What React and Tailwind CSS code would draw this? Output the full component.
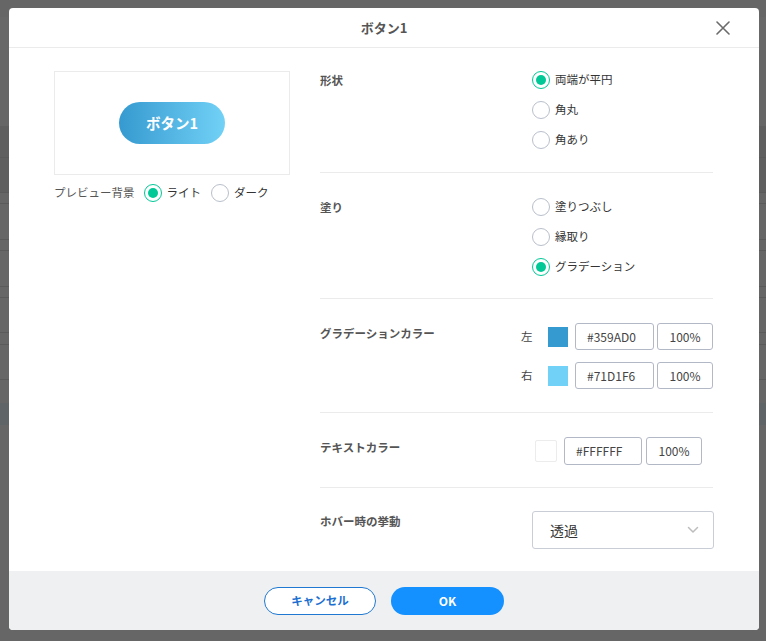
import React, { useState } from 'react';

const font = { fontFamily: '"Noto Sans CJK JP", "Noto Sans", sans-serif' };

function Radio({ checked, label, onClick }) {
  return (
    <button type="button" onClick={onClick} className="flex items-center h-[20px] gap-[5px] text-left">
      <span
        className={`w-[18px] h-[18px] rounded-full flex items-center justify-center shrink-0 bg-white ${
          checked ? 'border-[1.5px] border-[#00c896]' : 'border border-[#b9bfca]'
        }`}
      >
        {checked && <span className="w-[10px] h-[10px] rounded-full bg-[#00c896]" />}
      </span>
      <span className="text-[11.5px] text-[#333]">{label}</span>
    </button>
  );
}

function Section({ label, children, last, className = '' }) {
  return (
    <div className={`flex pt-6 pb-[22px] ${last ? '' : 'border-b border-[#ebebeb]'} ${className}`}>
      <div className="w-[212px] shrink-0 text-[11.5px] font-bold text-[#555] leading-[20px]">{label}</div>
      <div className="flex-1">{children}</div>
    </div>
  );
}

function ColorInput({ hex, pct, w = 'w-[79px]', h = 'h-[27px]', gap = 'gap-[3px]' }) {
  return (
    <div className={`flex ${gap}`}>
      <div className={`${w} ${h} border border-[#b3b8c6] rounded-[3px] pl-[11px] flex items-center text-[12px] text-[#444]`}>
        {hex}
      </div>
      <div className={`w-[56px] ${h} border border-[#b3b8c6] rounded-[3px] flex items-center justify-center text-[12px] text-[#444]`}>
        {pct}
      </div>
    </div>
  );
}

export default function App() {
  const [shape, setShape] = useState(0);
  const [fill, setFill] = useState(2);
  const [bg, setBg] = useState(0);

  return (
    <div className="relative w-[766px] h-[641px] bg-[#666] overflow-hidden" style={font}>
      {/* dimmed page behind the dialog */}
      <div className="flex flex-col">
        <div className="h-[17px]" />
        <div className="h-[33px] bg-[#686868]" />
        <div className="h-[76px]" />
        <div className="h-[32px] bg-[#5f5f5f] border-b border-[#5a5a5a]" />
        <div className="h-[35px] bg-[#5f5f5f] border-b border-[#5a5a5a]" />
        <div className="h-[11px] border-b border-[#5a5a5a]" />
        <div className="h-[36px] border-b border-[#5a5a5a]" />
        <div className="h-[11px] border-b border-[#5a5a5a]" />
        <div className="h-[36px] border-b border-[#5a5a5a]" />
        <div className="h-[11px] border-b border-[#5a5a5a]" />
        <div className="h-[35px] border-b border-[#5a5a5a]" />
        <div className="h-[12px] border-b border-[#5a5a5a]" />
        <div className="h-[35px] border-b border-[#5a5a5a]" />
        <div className="h-[23px]" />
        <div className="h-[22px] bg-[#5f6466]" />
      </div>

      {/* dialog */}
      <div className="absolute left-[9px] top-[8px] w-[750px] bg-white rounded-[4px] overflow-hidden">
        {/* Header */}
        <div className="relative h-[40px] border-b border-[#ebebeb] flex items-center justify-center">
          <span className="text-[13px] font-bold text-[#555]">ボタン1</span>
          <button type="button" className="absolute right-[29px] top-[13px]">
            <svg width="14" height="14" viewBox="0 0 14 14" fill="none" stroke="#6b6b6b" strokeWidth="1.6" strokeLinecap="round">
              <path d="M1 1 L13 13 M13 1 L1 13" />
            </svg>
          </button>
        </div>

        {/* Body */}
        <div className="flex gap-[30px] px-[45px]">
          {/* Preview */}
          <div className="w-[236px] pt-[23px]">
            <div className="h-[104px] border border-[#ebebeb] flex items-center justify-center">
              <div className="w-[106px] h-[42px] rounded-full bg-linear-to-r from-[#359AD0] to-[#71D1F6] flex items-center justify-center text-white font-bold text-[14.5px]">
                ボタン1
              </div>
            </div>
            <div className="mt-[8px] flex items-center h-[20px]">
              <span className="text-[11.5px] text-[#555] mr-[9px]">プレビュー背景</span>
              <Radio checked={bg === 0} label="ライト" onClick={() => setBg(0)} />
              <span className="w-[10px]" />
              <Radio checked={bg === 1} label="ダーク" onClick={() => setBg(1)} />
            </div>
          </div>

          {/* Settings */}
          <div className="w-[393px] flex flex-col">
            <Section label="形状" className="!pt-[22px]">
              <div className="flex flex-col gap-[10px]">
                {['両端が平円', '角丸', '角あり'].map((t, i) => (
                  <Radio key={t} checked={shape === i} label={t} onClick={() => setShape(i)} />
                ))}
              </div>
            </Section>

            <Section label="塗り" className="!pb-[21px]">
              <div className="flex flex-col gap-[10px]">
                {['塗りつぶし', '縁取り', 'グラデーション'].map((t, i) => (
                  <Radio key={t} checked={fill === i} label={t} onClick={() => setFill(i)} />
                ))}
              </div>
            </Section>

            <Section label="グラデーションカラー" className="!pb-[23px]">
              <div className="-ml-[11px] flex flex-col gap-[12px]">
                <div className="flex items-center">
                  <span className="text-[11.5px] text-[#444] w-[27px]">左</span>
                  <span className="w-[20px] h-[20px] bg-[#359AD0] mr-[7px]" />
                  <ColorInput hex="#359AD0" pct="100%" />
                </div>
                <div className="flex items-center">
                  <span className="text-[11.5px] text-[#444] w-[27px]">右</span>
                  <span className="w-[20px] h-[20px] bg-[#71D1F6] mr-[7px]" />
                  <ColorInput hex="#71D1F6" pct="100%" />
                </div>
              </div>
            </Section>

            <Section label="テキストカラー">
              <div className="ml-[3px] flex items-center">
                <span className="w-[22px] h-[22px] bg-white border border-[#ececec] rounded-[2px] mr-[7px]" />
                <ColorInput hex="#FFFFFF" pct="100%" w="w-[78px]" h="h-[28px]" gap="gap-[4px]" />
              </div>
            </Section>

            <Section label="ホバー時の挙動" last className="!pt-[23px]">
              <div className="w-[182px] h-[38px] border border-[#c9cdd5] rounded-[3px] flex items-center justify-between pl-[17px] pr-[14px]">
                <span className="text-[14px] text-[#333]">透過</span>
                <svg width="12" height="8" viewBox="0 0 12 8" fill="none" stroke="#bdbdbd" strokeWidth="1.5" strokeLinecap="round" strokeLinejoin="round">
                  <path d="M1.5 1.5 L6 6 L10.5 1.5" />
                </svg>
              </div>
            </Section>
          </div>
        </div>

        {/* Footer */}
        <div className="h-[59px] bg-[#eff0f2] flex items-center justify-center gap-[15px]">
          <button
            type="button"
            className="w-[112px] h-[28px] rounded-full bg-white border border-[#1f78d1] text-[#1a6fd1] text-[11.5px] font-bold"
          >
            キャンセル
          </button>
          <button
            type="button"
            className="w-[113px] h-[28px] rounded-full bg-[#1490ff] text-white text-[12px] font-bold"
          >
            OK
          </button>
        </div>
      </div>
    </div>
  );
}
